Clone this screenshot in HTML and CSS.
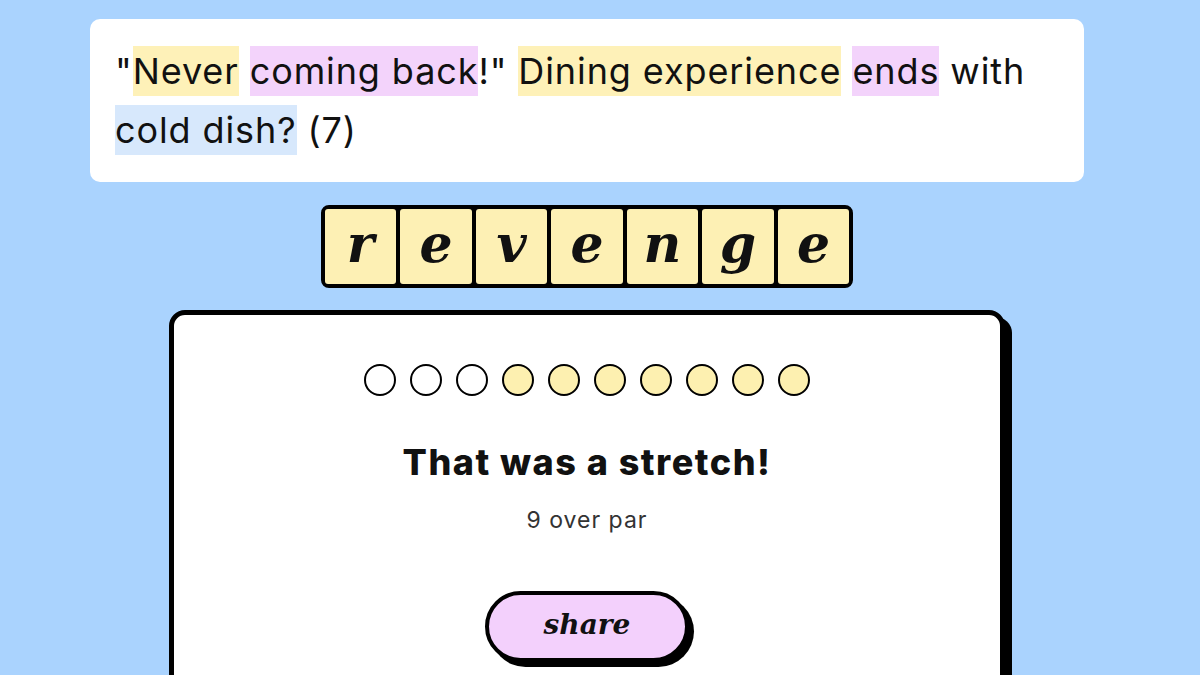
FILE: index.html
```html
<!DOCTYPE html>
<html lang="en">

<head>
    <meta charset="UTF-8">
    <meta name="viewport" content="width=device-width, initial-scale=1.0">
    <title>Crossword clue</title>
    <link rel="stylesheet" href="styles.css">
</head>

<body>
    <div id="page">
        <div id="clueCard">
            <p class="clue">"<span class="hl yellow">Never</span> <span class="hl pink">coming back</span>!" <span class="hl yellow">Dining experience</span> <span class="hl pink">ends</span> with <span class="hl blue">cold dish?</span> (7)</p>
        </div>

        <div id="answerRow">
            <div class="tiles">
                <div class="tile">r</div>
                <div class="tile">e</div>
                <div class="tile">v</div>
                <div class="tile">e</div>
                <div class="tile">n</div>
                <div class="tile">g</div>
                <div class="tile">e</div>
            </div>
        </div>

        <div id="resultCard">
            <div class="dots">
                <span class="dot"></span>
                <span class="dot"></span>
                <span class="dot"></span>
                <span class="dot full"></span>
                <span class="dot full"></span>
                <span class="dot full"></span>
                <span class="dot full"></span>
                <span class="dot full"></span>
                <span class="dot full"></span>
                <span class="dot full"></span>
            </div>
            <h2 class="title">That was a stretch!</h2>
            <p class="score">9 over par</p>
            <button class="shareBtn">share</button>
        </div>
    </div>
</body>

</html>
```

FILE: styles.css
```css
body {
    margin: 0;
    background-color: #aad3fe;
    font-family: Inter, "Open Sans", sans-serif;
    color: #111;
    overflow: hidden;
}

#page {
    width: 1010px;
    height: 100vh;
    box-sizing: border-box;
    margin-left: 90px;
    padding-top: 19px;
    padding-right: 16px;
    overflow: hidden;
}

#clueCard {
    background-color: #fff;
    border-radius: 10px;
    padding: 23px 25px;
}

.clue {
    margin: 0;
    font-size: 36px;
    letter-spacing: 0.9px;
    line-height: 58.5px;
}

.hl {
    padding: 3px 0;
}

.yellow {
    background-color: #fef1b8;
}

.pink {
    background-color: #f3d3fb;
}

.blue {
    background-color: #d7e8fc;
}

#answerRow {
    display: flex;
    justify-content: center;
    margin-top: 23px;
}

.tiles {
    display: flex;
    gap: 4px;
    background-color: #000;
    border: 4px solid #000;
    border-radius: 8px;
}

.tile {
    width: 71.5px;
    height: 75px;
    background-color: #fdf0b4;
    border-radius: 3px;
    display: flex;
    justify-content: center;
    align-items: center;
    font-family: "DejaVu Serif", serif;
    font-weight: bold;
    font-style: italic;
    font-size: 52px;
    line-height: 1;
    padding-bottom: 6px;
    box-sizing: border-box;
}

#resultCard {
    width: 836px;
    box-sizing: border-box;
    margin: 22px auto 0;
    background-color: #fff;
    border: 5px solid #000;
    border-radius: 16px;
    box-shadow: 7px 7px 0 #000;
    padding-top: 49px;
    height: 420px;
    display: flex;
    flex-direction: column;
    align-items: center;
}

.dots {
    display: flex;
    gap: 14px;
}

.dot {
    width: 32px;
    height: 32px;
    box-sizing: border-box;
    border: 2px solid #000;
    border-radius: 50%;
    background-color: #fff;
}

.dot.full {
    background-color: #fdf0b0;
}

.title {
    margin: 45px 0 0;
    font-size: 36px;
    letter-spacing: 1.5px;
    line-height: 43px;
    font-weight: 800;
}

.score {
    margin: 23px 0 0;
    font-size: 23px;
    letter-spacing: 1px;
    line-height: 26px;
    color: #333;
}

.shareBtn {
    margin-top: 58px;
    width: 204px;
    height: 71px;
    background-color: #f3d0fc;
    border: 4px solid #000;
    border-radius: 36px;
    box-shadow: 5px 5px 0 #000;
    font-family: "DejaVu Serif", serif;
    font-weight: bold;
    font-style: italic;
    font-size: 28px;
    color: #111;
    padding: 0 0 4px;
}
```
